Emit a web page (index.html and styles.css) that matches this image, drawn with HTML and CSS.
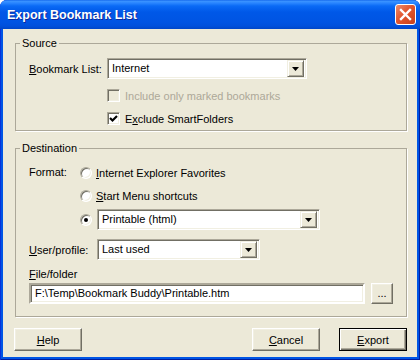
FILE: index.html
```html
<!DOCTYPE html>
<html lang="en">
<head>
  <meta charset="UTF-8">
  <title>Export Bookmark List</title>
  <link rel="stylesheet" href="styles.css">
</head>
<body>

  <div class="window">
    <!-- Title bar -->
    <div class="titlebar">
      <span class="title">Export Bookmark List</span>
      <button class="close" aria-label="Close">
        <svg width="13" height="13" viewBox="0 0 13 13">
          <path d="M2 2L11 11M11 2L2 11" stroke="#fff" stroke-width="2.4" stroke-linecap="square"/>
        </svg>
      </button>
    </div>

    <div class="client">
      <!-- Source -->
      <fieldset class="group source">
        <legend>Source</legend>
        <div class="rows">
          <div class="row field-row">
            <span class="label label-list"><u>B</u>ookmark List:</span>
            <div class="combo combo-list">
              <span class="combo-value">Internet</span>
              <span class="combo-btn"><svg width="7" height="4" viewBox="0 0 7 4"><path d="M0 0H7L3.5 4Z" fill="#000"/></svg></span>
            </div>
          </div>
          <div class="check-row first disabled">
            <span class="checkbox"></span>Include only marked bookmarks
          </div>
          <div class="check-row">
            <span class="checkbox"><svg width="9" height="9" viewBox="0 0 9 9"><path d="M1 4L3.5 6.5L8 2" stroke="#000" stroke-width="2.2" fill="none"/></svg></span>E<u>x</u>clude SmartFolders
          </div>
        </div>
      </fieldset>

      <!-- Destination -->
      <fieldset class="group dest">
        <legend>Destination</legend>
        <div class="rows">
          <div class="format">
            <span class="label label-format">Format:</span>
            <div class="options">
              <div class="radio-row"><span class="radio"></span><u>I</u>nternet Explorer Favorites</div>
              <div class="radio-row"><span class="radio"></span><u>S</u>tart Menu shortcuts</div>
              <div class="radio-row combo-option">
                <span class="radio checked"></span>
                <div class="combo combo-format">
                  <span class="combo-value">Printable (html)</span>
                  <span class="combo-btn"><svg width="7" height="4" viewBox="0 0 7 4"><path d="M0 0H7L3.5 4Z" fill="#000"/></svg></span>
                </div>
              </div>
            </div>
          </div>
          <div class="row field-row user-row">
            <span class="label label-user"><u>U</u>ser/profile:</span>
            <div class="combo combo-user">
              <span class="combo-value">Last used</span>
              <span class="combo-btn"><svg width="7" height="4" viewBox="0 0 7 4"><path d="M0 0H7L3.5 4Z" fill="#000"/></svg></span>
            </div>
          </div>
          <div class="file-label"><u>F</u>ile/folder</div>
          <div class="row file-row">
            <div class="textbox">F:\Temp\Bookmark Buddy\Printable.htm</div>
            <button class="btn browse">...</button>
          </div>
        </div>
      </fieldset>

      <!-- Buttons -->
      <div class="buttons">
        <button class="btn help"><u>H</u>elp</button>
        <button class="btn cancel"><u>C</u>ancel</button>
        <button class="btn export default"><u>E</u>xport</button>
      </div>
    </div>
  </div>

</body>
</html>
```

FILE: styles.css
```css
* {
  box-sizing: border-box;
}

body {
  margin: 0;
  background: #ffffff;
  font-family: "Liberation Sans", Arial, sans-serif;
  font-size: 11px;
  color: #000;
}

u {
  text-decoration: underline;
}

.window {
  width: 420px;
  height: 360px;
  display: flex;
  flex-direction: column;
  background: #0055e5;
  border-radius: 7px 7px 0 0;
  overflow: hidden;
  box-shadow: inset 1px 0 0 #0831d9, inset -1px 0 0 #001ea0, inset 0 -1px 0 #001ea0;
}

.titlebar {
  flex: none;
  height: 29px;
  display: flex;
  align-items: center;
  padding: 0 4px 0 7px;
  background: linear-gradient(to bottom, #0a5de8 0, #3d95ff 1px, #2a86ff 3px, #0a6af5 6px, #0058e8 12px, #0054e3 22px, #0050dc 26px, #0046c8 29px);
}

.title {
  flex: 1;
  color: #fff;
  font-weight: bold;
  font-size: 12.5px;
  text-shadow: 1px 1px 0 #0f2a9a;
}

.close {
  width: 21px;
  height: 21px;
  padding: 0;
  display: flex;
  align-items: center;
  justify-content: center;
  border: 1px solid #fff;
  border-radius: 3px;
  background: linear-gradient(135deg, #eb8c6e 0, #e2562f 45%, #c6401c 100%);
}

.client {
  flex: 1;
  margin: 0 3px 3px;
  background: #ece9d8;
  padding: 8px 10px 0 12px;
  display: flex;
  flex-direction: column;
}

/* group boxes */
.group {
  margin: 0;
  min-width: 0;
  border: 1px solid #aca899;
  box-shadow: 1px 1px 0 #fff;
  padding: 8px 10px 3px 4px;
}

.group legend {
  padding: 0 2px;
  line-height: 13px;
}

.group .rows {
  padding-left: 9px;
}

.dest {
  margin-top: 11px;
  padding: 9px 10px 12px 4px;
}

.row {
  display: flex;
  align-items: center;
}

.field-row {
  height: 21px;
}

.label-list {
  width: 78px;
}

.label-user {
  width: 68px;
}

/* combo boxes */
.combo {
  height: 21px;
  display: flex;
  align-items: center;
  background: #fff;
  padding: 2px;
  border: 1px solid;
  border-color: #aca899 #fff #fff #aca899;
  box-shadow: inset 1px 1px 0 #716f64, inset -1px -1px 0 #f1efe2;
}

.combo-list {
  width: 200px;
}

.combo-format {
  width: 223px;
}

.combo-user {
  width: 163px;
}

.combo-value {
  flex: 1;
  padding-left: 2px;
  line-height: 17px;
  white-space: nowrap;
}

.combo-btn {
  width: 17px;
  height: 17px;
  display: flex;
  align-items: center;
  justify-content: center;
  background: #ece9d8;
  border: 1px solid;
  border-color: #f1efe2 #716f64 #716f64 #f1efe2;
  box-shadow: inset 1px 1px 0 #fff, inset -1px -1px 0 #aca899;
}

/* checkboxes */
.check-row {
  height: 17px;
  display: flex;
  align-items: center;
  margin: 6px 0 0 78px;
}

.check-row.first {
  margin-top: 8px;
}

.checkbox {
  width: 13px;
  height: 13px;
  margin-right: 5px;
  display: flex;
  align-items: center;
  justify-content: center;
  background: #fff;
  border: 1px solid;
  border-color: #aca899 #fff #fff #aca899;
  box-shadow: inset 1px 1px 0 #716f64, inset -1px -1px 0 #f1efe2;
}

.disabled {
  color: #aca899;
}

.disabled .checkbox {
  background: #ece9d8;
}

/* radio buttons */
.format {
  display: flex;
}

.label-format {
  width: 51px;
  line-height: 17px;
}

.radio-row {
  height: 17px;
  display: flex;
  align-items: center;
}

.radio-row + .radio-row {
  margin-top: 6px;
}

.radio-row.combo-option {
  height: 21px;
  margin-top: 5px;
}

.radio {
  width: 12px;
  height: 12px;
  margin-right: 4px;
  border-radius: 50%;
  background: #fff;
  border: 1px solid;
  border-color: #aca899 #fff #fff #aca899;
  box-shadow: inset 1px 1px 0 #716f64, inset -1px -1px 0 #f1efe2;
  display: flex;
  align-items: center;
  justify-content: center;
}

.combo-option .radio {
  margin-right: 5px;
}

.radio.checked::after {
  content: "";
  width: 4px;
  height: 4px;
  border-radius: 50%;
  background: #000;
}

.user-row {
  margin-top: 9px;
}

.file-label {
  margin-top: 8px;
  line-height: 13px;
}

.file-row {
  margin-top: 2px;
}

.textbox {
  width: 336px;
  height: 21px;
  padding: 0 4px;
  line-height: 17px;
  background: #fff;
  border: 2px solid;
  border-color: #aca899 #fff #fff #aca899;
  box-shadow: inset 1px 1px 0 #716f64, inset -1px -1px 0 #f1efe2;
  white-space: nowrap;
}

/* push buttons */
.btn {
  width: 68px;
  height: 23px;
  padding: 0;
  font-family: "Liberation Sans", Arial, sans-serif;
  font-size: 11px;
  color: #000;
  background: #ece9d8;
  border: 1px solid;
  border-color: #fff #716f64 #716f64 #fff;
  box-shadow: inset -1px -1px 0 #aca899, inset 1px 1px 0 #f1efe2;
}

.browse {
  width: 22px;
  height: 21px;
  margin-left: 6px;
  line-height: 19px;
}

.buttons {
  display: flex;
  margin-top: 11px;
}

.help {
  margin-left: -1px;
  margin-right: auto;
}

.export {
  margin-left: 19px;
}

.btn.default {
  border-color: #000;
  box-shadow: inset 1px 1px 0 #fff, inset -1px -1px 0 #716f64, inset -2px -2px 0 #aca899;
}
```
